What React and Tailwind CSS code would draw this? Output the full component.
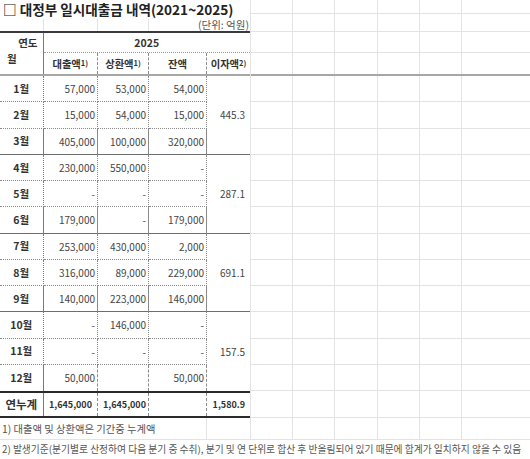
import React from 'react';

const rows = [
  ['1월', '57,000', '53,000', '54,000'],
  ['2월', '15,000', '54,000', '15,000'],
  ['3월', '405,000', '100,000', '320,000'],
  ['4월', '230,000', '550,000', '-'],
  ['5월', '-', '-', '-'],
  ['6월', '179,000', '-', '179,000'],
  ['7월', '253,000', '430,000', '2,000'],
  ['8월', '316,000', '89,000', '229,000'],
  ['9월', '140,000', '223,000', '146,000'],
  ['10월', '-', '146,000', '-'],
  ['11월', '-', '-', '-'],
  ['12월', '50,000', '', '50,000'],
];

const interest = ['445.3', '287.1', '691.1', '157.5'];

// right-hand empty sheet area: row heights in px, last style for freeze line
const sheetRows = [
  { h: 'h-[14px]', b: 'border-b border-[#e3e3e3]' },
  { h: 'h-[18px]', b: 'border-b border-[#e3e3e3]' },
  { h: 'h-[21px]', b: 'border-b border-[#e3e3e3]' },
  { h: 'h-[23px]', b: 'border-b-2 border-[#a6a6a6]' },
  ...Array.from({ length: 12 }, () => ({ h: 'h-[26.25px]', b: 'border-b border-[#e3e3e3]' })),
  { h: 'h-[27px]', b: 'border-b border-[#e3e3e3]' },
  { h: 'h-[22px]', b: 'border-b border-[#e3e3e3]' },
];

function SheetRow({ h, b }) {
  return (
    <div className={`flex ${h} ${b}`}>
      <div className="w-[42px] shrink-0 border-r border-[#e3e3e3]" />
      <div className="w-[42px] shrink-0 border-r border-[#e3e3e3]" />
      <div className="w-[42.5px] shrink-0 border-r border-[#e3e3e3]" />
      <div className="w-[42.5px] shrink-0 border-r border-[#e3e3e3]" />
      <div className="w-[42px] shrink-0 border-r border-[#e3e3e3]" />
      <div className="flex-1" />
    </div>
  );
}

function Sup({ children }) {
  return <sup className="text-[7.5px] relative -top-[1px]">{children}</sup>;
}

function BodyRows() {
  const cells = [];
  rows.forEach((r, i) => {
    const inQuarter = i % 3;
    const last = inQuarter === 2;
    const bottom = last
      ? i === 11
        ? ''
        : 'border-b border-b-[#6e6e6e] border-solid'
      : 'border-b border-b-[#8a8a8a] border-dotted';
    cells.push(
      <div key={`m${i}`} className={`flex items-center justify-center font-bold text-[10.5px] text-[#333] border-r border-r-[#7a7a7a] ${bottom}`}>
        {r[0]}
      </div>
    );
    [1, 2, 3].forEach((c) => {
      cells.push(
        <div key={`c${i}-${c}`} className={`flex items-center justify-end pr-[2px] text-[10px] text-[#444] border-r border-dashed border-r-[#8a8a8a] ${bottom}`}>
          {r[c]}
        </div>
      );
    });
    if (inQuarter === 0) {
      const q = i / 3;
      cells.push(
        <div key={`q${q}`} className={`row-span-3 flex items-center justify-end pr-[5px] text-[10px] text-[#444] ${q === 3 ? '' : 'border-b border-b-[#6e6e6e]'}`}>
          {interest[q]}
        </div>
      );
    }
  });
  return (
    <div className="grid grid-cols-[43.5px_54.5px_51px_58px_43px] grid-rows-[repeat(12,26.25px)]">
      {cells}
    </div>
  );
}

export default function App() {
  return (
    <div className="w-[530px] h-[459px] bg-white overflow-hidden text-[#333]" style={{ fontFamily: '"Noto Sans CJK KR", "Noto Sans", sans-serif' }}>
      <div className="flex">
        {/* table side */}
        <div className="w-[250px] shrink-0">
          <div className="h-[19px] pl-[3px] flex items-center whitespace-nowrap text-[13.6px] font-bold text-[#222] leading-none relative z-10">
            □ 대정부 일시대출금 내역(2021~2025)
          </div>
          <div className="h-[12px] flex">
            <div className="w-[43.5px] border-r border-[#e3e3e3]" />
            <div className="w-[54.5px] border-r border-[#e3e3e3]" />
            <div className="w-[51px] border-r border-[#e3e3e3]" />
            <div className="flex-1 text-right text-[10.5px] leading-[12px] text-[#555] pr-[1px] whitespace-nowrap">(단위: 억원)</div>
          </div>

          {/* header */}
          <div className="grid grid-cols-[43.5px_54.5px_51px_58px_43px] grid-rows-[20px_21px] border-t-2 border-t-[#3a3a3a] border-b-2 border-b-[#a6a6a6]">
            <div className="row-span-2 flex flex-col border-r border-r-[#7a7a7a] text-[10.5px] font-bold">
              <div className="h-[20px] flex items-center justify-end pr-[5px]">연도</div>
              <div className="flex-1 flex items-start pl-[7px] -mt-[2px]">월</div>
            </div>
            <div className="col-span-4 flex items-center justify-center text-[10.5px] font-bold border-b border-dotted border-b-[#9a9a9a]">
              2025
            </div>
            <div className="flex items-center justify-center text-[10.3px] font-bold border-r border-dashed border-r-[#8a8a8a]">
              대출액<Sup>1)</Sup>
            </div>
            <div className="flex items-center justify-center text-[10.3px] font-bold border-r border-dashed border-r-[#8a8a8a]">
              상환액<Sup>1)</Sup>
            </div>
            <div className="flex items-center justify-center text-[10.3px] font-bold border-r border-dashed border-r-[#8a8a8a]">
              잔액
            </div>
            <div className="flex items-center justify-center text-[10.3px] font-bold">
              이자액<Sup>2)</Sup>
            </div>
          </div>

          <BodyRows />

          {/* total */}
          <div className="grid grid-cols-[43.5px_54.5px_51px_58px_43px] h-[27px] border-t-2 border-b-2 border-[#2a2a2a]">
            <div className="flex items-center justify-center font-bold text-[11.5px] text-[#333] border-r border-r-[#7a7a7a]">연누계</div>
            <div className="flex items-center justify-end pr-[5px] font-bold text-[9px] text-[#333] border-r border-dashed border-r-[#8a8a8a]">1,645,000</div>
            <div className="flex items-center justify-end pr-[2px] font-bold text-[9px] text-[#333] border-r border-dashed border-r-[#8a8a8a]">1,645,000</div>
            <div className="border-r border-dashed border-r-[#8a8a8a]" />
            <div className="flex items-center justify-end pr-[5px] font-bold text-[9px] text-[#333]">1,580.9</div>
          </div>

          {/* footnote 1 */}
          <div className="h-[22px] flex border-b border-[#e3e3e3]">
            <div className="w-[207px] flex items-center pl-[2px] text-[10.3px] text-[#555] whitespace-nowrap border-r border-[#e3e3e3]">
              1) 대출액 및 상환액은 기간중 누계액
            </div>
            <div className="flex-1" />
          </div>
        </div>

        {/* empty sheet side */}
        <div className="flex-1 border-l border-[#e3e3e3]">
          {sheetRows.map((r, i) => (
            <SheetRow key={i} h={r.h} b={r.b} />
          ))}
        </div>
      </div>

      {/* footnote 2 */}
      <div className="h-[19px] flex items-center pl-[2px] text-[9.75px] text-[#555] whitespace-nowrap">
        2) 발생기준(분기별로 산정하여 다음 분기 중 수취), 분기 및 연 단위로 합산 후 반올림되어 있기 때문에 합계가 일치하지 않을 수 있음
      </div>
    </div>
  );
}
